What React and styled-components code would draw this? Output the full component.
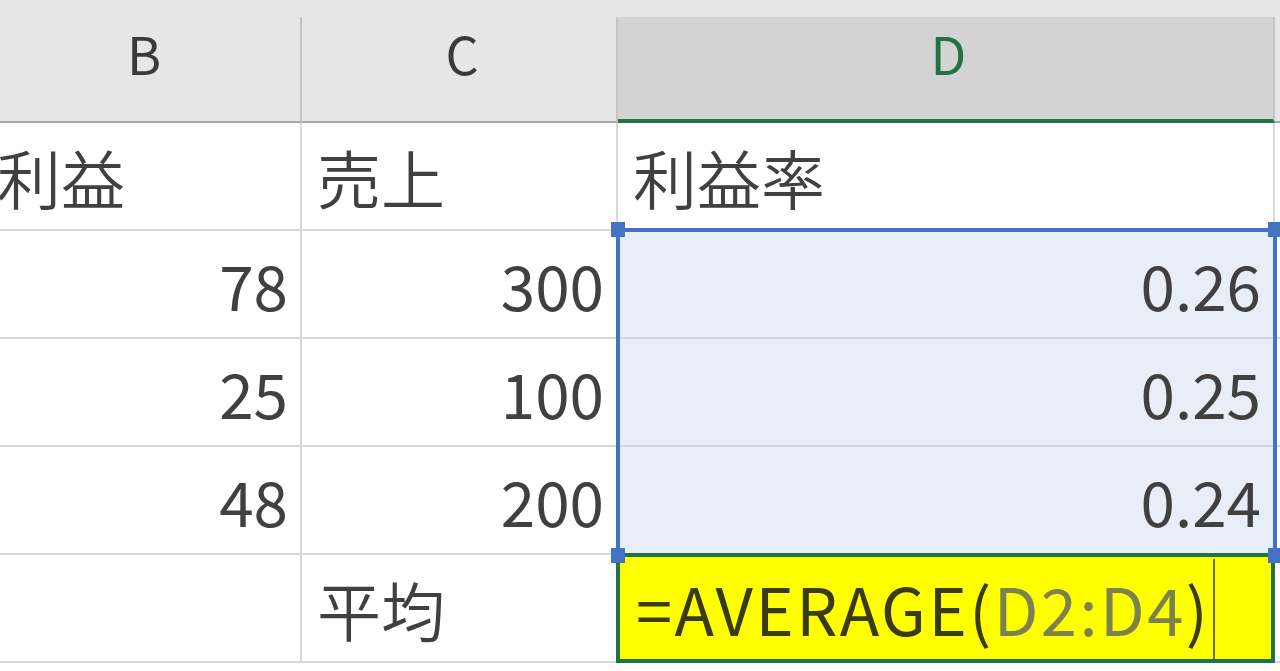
import React from 'react'
import styled, { createGlobalStyle } from 'styled-components'

const GlobalStyle = createGlobalStyle`
  html, body {
    margin: 0;
    padding: 0;
    background: #ffffff;
    overflow: hidden;
  }
  body {
    font-family: "Noto Sans CJK JP", "Noto Sans", sans-serif;
  }
`

const Sheet = styled.div`
  width: 1280px;
  height: 671px;
  overflow: hidden;
  background: #ffffff;
`
const TopStrip = styled.div`
  height: 17px;
  background: #e6e6e6;
`
const Grid = styled.div`
  display: grid;
  grid-template-columns: 320px 316px 657px 1fr;
  grid-template-rows: 106px repeat(5, 108px);
  margin-left: -18px;
  width: calc(100% + 18px);
`
const ColHeader = styled.div`
  grid-column: ${p => p.$c};
  grid-row: 1;
  box-sizing: border-box;
  display: flex;
  justify-content: center;
  align-items: flex-start;
  padding: 2px 0 0 6px;
  background: ${p => (p.$active ? '#d3d3d3' : '#e6e6e6')};
  border-right: 2px solid #c4c4c4;
  border-bottom: ${p => (p.$active ? '4px solid #217346' : '2px solid #a8a8a8')};
  color: ${p => (p.$active ? '#217346' : '#3a3a3a')};
  font-size: 52px;
  font-weight: 400;
  line-height: 1.3;
`
const Cell = styled.div`
  grid-column: ${p => p.$c};
  grid-row: ${p => p.$r};
  box-sizing: border-box;
  display: flex;
  align-items: center;
  justify-content: ${p => (p.$num ? 'flex-end' : 'flex-start')};
  padding: 0 12px 0 15px;
  background: ${p => (p.$sel ? '#e8eef8' : '#ffffff')};
  border-right: 2px solid #d8d8d8;
  border-bottom: 2px solid ${p => (p.$sel ? '#cfd5de' : '#d8d8d8')};
  color: #404040;
  font-size: ${p => (p.$num ? '62px' : '64px')};
  font-weight: ${p => (p.$num ? 400 : 350)};
  line-height: 1;
  white-space: nowrap;
  overflow: hidden;
`
const Selection = styled.div`
  grid-column: 3;
  grid-row: 3 / 6;
  position: relative;
  z-index: 2;
  margin: -3px -2px 0 -2px;
  border: 4px solid #4472c4;
  border-bottom: none;
  pointer-events: none;
`
const Handle = styled.span`
  position: absolute;
  width: 14px;
  height: 15px;
  background: #4472c4;
  ${p => (p.$top ? 'top: -10px;' : 'bottom: -8px;')}
  ${p => (p.$left ? 'left: -9px;' : 'right: -9px;')}
`
const ActiveCell = styled.div`
  grid-column: 3;
  grid-row: 6;
  position: relative;
  z-index: 1;
  box-sizing: border-box;
  margin: -2px 0 0 -2px;
  display: flex;
  align-items: center;
  padding: 0 0 0 16px;
  background: #ffff00;
  border: 4px solid #217346;
  color: #3a3a14;
  font-size: 65px;
  font-weight: 400;
  letter-spacing: 2.5px;
  line-height: 1;
  white-space: nowrap;
`
const Ref = styled.span`
  color: #7b8250;
`
const Caret = styled.span`
  align-self: stretch;
  width: 2px;
  margin: 2px 0 0 3px;
  background: #6b6a3c;
`

const rows = [
  ['利益', '売上', '利益率'],
  ['78', '300', '0.26'],
  ['25', '100', '0.25'],
  ['48', '200', '0.24'],
  ['', '平均', null],
]

const isNum = v => /^[0-9.]+$/.test(v)

export default function App() {
  return (
    <Sheet>
      <GlobalStyle />
      <TopStrip />
      <Grid>
        {['B', 'C', 'D', ''].map((h, i) => (
          <ColHeader key={i} $c={i + 1} $active={h === 'D'}>
            {h}
          </ColHeader>
        ))}
        {rows.map((row, ri) =>
          [...row, ''].map((v, ci) => {
            if (v === null) {
              return (
                <ActiveCell key={`${ri}-${ci}`}>
                  =AVERAGE(<Ref>D2:D4</Ref>)<Caret />
                </ActiveCell>
              )
            }
            return (
              <Cell
                key={`${ri}-${ci}`}
                $r={ri + 2}
                $c={ci + 1}
                $num={isNum(v)}
                $sel={ci === 2 && ri >= 1 && ri <= 3}
              >
                {v}
              </Cell>
            )
          })
        )}
        <Selection>
          <Handle $top $left />
          <Handle $top />
          <Handle $left />
          <Handle />
        </Selection>
      </Grid>
    </Sheet>
  )
}
